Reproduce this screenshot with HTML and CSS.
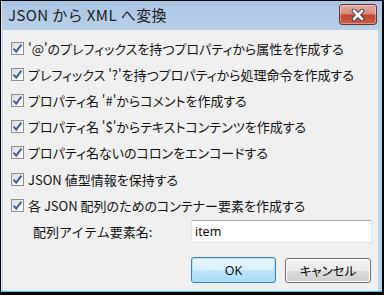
FILE: index.html
```html
<!DOCTYPE html>
<html lang="ja">
<head>
<meta charset="utf-8">
<link rel="stylesheet" href="styles.css">
</head>
<body>
<div class="window">
  <div class="titlebar">
    <span class="title">JSON から XML へ変換</span>
    <button class="close" aria-label="閉じる">
      <svg width="16" height="12" viewBox="0 0 16 12">
        <path d="M4 2 L12 10 M12 2 L4 10" stroke="#3d3d4a" stroke-width="4.6" stroke-linecap="round"/>
        <path d="M4 2 L12 10 M12 2 L4 10" stroke="#ffffff" stroke-width="2.8" stroke-linecap="round"/>
      </svg>
    </button>
  </div>
  <div class="client">
    <div class="rows">
      <label class="row"><span class="cb"><svg width="11" height="11" viewBox="0 0 11 11"><path d="M1.6 5.6 L4.2 8.6 L9.4 1.6" fill="none" stroke="#3c5ea8" stroke-width="2"/></svg></span><span class="txt">'@'のプレフィックスを持つプロパティから属性を作成する</span></label>
      <label class="row"><span class="cb"><svg width="11" height="11" viewBox="0 0 11 11"><path d="M1.6 5.6 L4.2 8.6 L9.4 1.6" fill="none" stroke="#3c5ea8" stroke-width="2"/></svg></span><span class="txt">プレフィックス '?'を持つプロパティから処理命令を作成する</span></label>
      <label class="row"><span class="cb"><svg width="11" height="11" viewBox="0 0 11 11"><path d="M1.6 5.6 L4.2 8.6 L9.4 1.6" fill="none" stroke="#3c5ea8" stroke-width="2"/></svg></span><span class="txt">プロパティ名 '#'からコメントを作成する</span></label>
      <label class="row"><span class="cb"><svg width="11" height="11" viewBox="0 0 11 11"><path d="M1.6 5.6 L4.2 8.6 L9.4 1.6" fill="none" stroke="#3c5ea8" stroke-width="2"/></svg></span><span class="txt">プロパティ名 '$'からテキストコンテンツを作成する</span></label>
      <label class="row"><span class="cb"><svg width="11" height="11" viewBox="0 0 11 11"><path d="M1.6 5.6 L4.2 8.6 L9.4 1.6" fill="none" stroke="#3c5ea8" stroke-width="2"/></svg></span><span class="txt">プロパティ名ないのコロンをエンコードする</span></label>
      <label class="row"><span class="cb"><svg width="11" height="11" viewBox="0 0 11 11"><path d="M1.6 5.6 L4.2 8.6 L9.4 1.6" fill="none" stroke="#3c5ea8" stroke-width="2"/></svg></span><span class="txt">JSON 値型情報を保持する</span></label>
      <label class="row"><span class="cb"><svg width="11" height="11" viewBox="0 0 11 11"><path d="M1.6 5.6 L4.2 8.6 L9.4 1.6" fill="none" stroke="#3c5ea8" stroke-width="2"/></svg></span><span class="txt">各 JSON 配列のためのコンテナー要素を作成する</span></label>
    </div>
    <div class="field">
      <span class="field-label">配列アイテム要素名:</span>
      <div class="input">item</div>
    </div>
    <div class="buttons">
      <button class="btn btn-ok">OK</button>
      <button class="btn btn-cancel">キャンセル</button>
    </div>
  </div>
</div>
</body>
</html>
```

FILE: styles.css
```css
html, body {
  margin: 0;
  padding: 0;
  background: #000;
  width: 384px;
  height: 295px;
  overflow: hidden;
}

.window {
  margin: 1px 0 0 1px;
  width: 381px;
  height: 291px;
  box-sizing: border-box;
  background: linear-gradient(#a9c6e3 0px, #b9d1ea 30px, #bcd3ec 100%);
  border-left: 1px solid #dfeaf5;
  border-bottom: 1px solid #3fc0e6;
  display: flex;
  flex-direction: column;
  font-family: "Noto Sans CJK JP", "Noto Sans", sans-serif;
}

.titlebar {
  height: 29px;
  flex: none;
  display: flex;
  align-items: center;
  justify-content: space-between;
  padding: 0 5px 0 6px;
}

.title {
  font-size: 15px;
  color: #1b1b1b;
  margin-top: -3px;
  letter-spacing: 0.4px;
}

.close {
  width: 38px;
  height: 21px;
  margin-top: -2px;
  padding: 0;
  border: 1px solid #6a3131;
  border-radius: 3px;
  background: linear-gradient(#e6aa9f 0%, #d98b7d 45%, #c2462f 55%, #cc5d43 100%);
  box-shadow: inset 0 0 0 1px rgba(255,255,255,0.35);
  display: flex;
  align-items: center;
  justify-content: center;
}

.client {
  flex: 1;
  margin: 0 4px 0 1px;
  background: #f0f0f0;
  border-left: 1px solid #f8f8f8;
  display: flex;
  flex-direction: column;
  padding: 5px 6px 0 7px;
}

.rows {
  display: flex;
  flex-direction: column;
}

.row {
  height: 26.2px;
  display: flex;
  align-items: center;
  gap: 4px;
  font-size: 13px;
  font-feature-settings: "palt";
  color: #111;
}

.cb {
  width: 13px;
  height: 13px;
  box-sizing: border-box;
  border: 1px solid #8e8f8f;
  background: linear-gradient(135deg, #d8d8d8, #f6f6f6 60%, #ffffff);
  display: flex;
  align-items: center;
  justify-content: center;
  flex: none;
}

.cb svg {
  display: block;
}

.field {
  display: flex;
  align-items: center;
  height: 26px;
  padding-left: 22px;
}

.field-label {
  width: 158px;
  font-size: 13px;
  color: #111;
}

.input {
  flex: 1;
  height: 23px;
  box-sizing: border-box;
  background: #fff;
  border: 1px solid #e2e3ea;
  border-top-color: #abadb3;
  padding-left: 3px;
  font-family: "Open Sans", "Liberation Sans", sans-serif;
  font-size: 12.5px;
  line-height: 21px;
  color: #000;
}

.buttons {
  display: flex;
  justify-content: flex-end;
  gap: 9px;
  margin-top: 13px;
  padding-right: 1px;
}

.btn {
  height: 26px;
  box-sizing: border-box;
  border-radius: 3px;
  padding: 0;
  font-size: 12.5px;
  color: #000;
}

.btn-ok {
  width: 85px;
  font-family: "Open Sans", "Liberation Sans", sans-serif;
  border: 1px solid #3c7fb1;
  background: linear-gradient(#eaf6fd 0%, #d9f0fc 50%, #bee6fd 51%, #a7d9f5 100%);
  box-shadow: inset 0 0 0 1px #aee3f8;
}

.btn-cancel {
  width: 86px;
  height: 25px;
  margin-top: 1px;
  font-family: "Noto Sans CJK JP", sans-serif;
  font-feature-settings: "palt";
  border: 1px solid #707070;
  background: linear-gradient(#f2f2f2 0%, #ebebeb 50%, #dddddd 51%, #cfcfcf 100%);
  box-shadow: inset 0 0 0 1px #fcfcfc;
}
```
